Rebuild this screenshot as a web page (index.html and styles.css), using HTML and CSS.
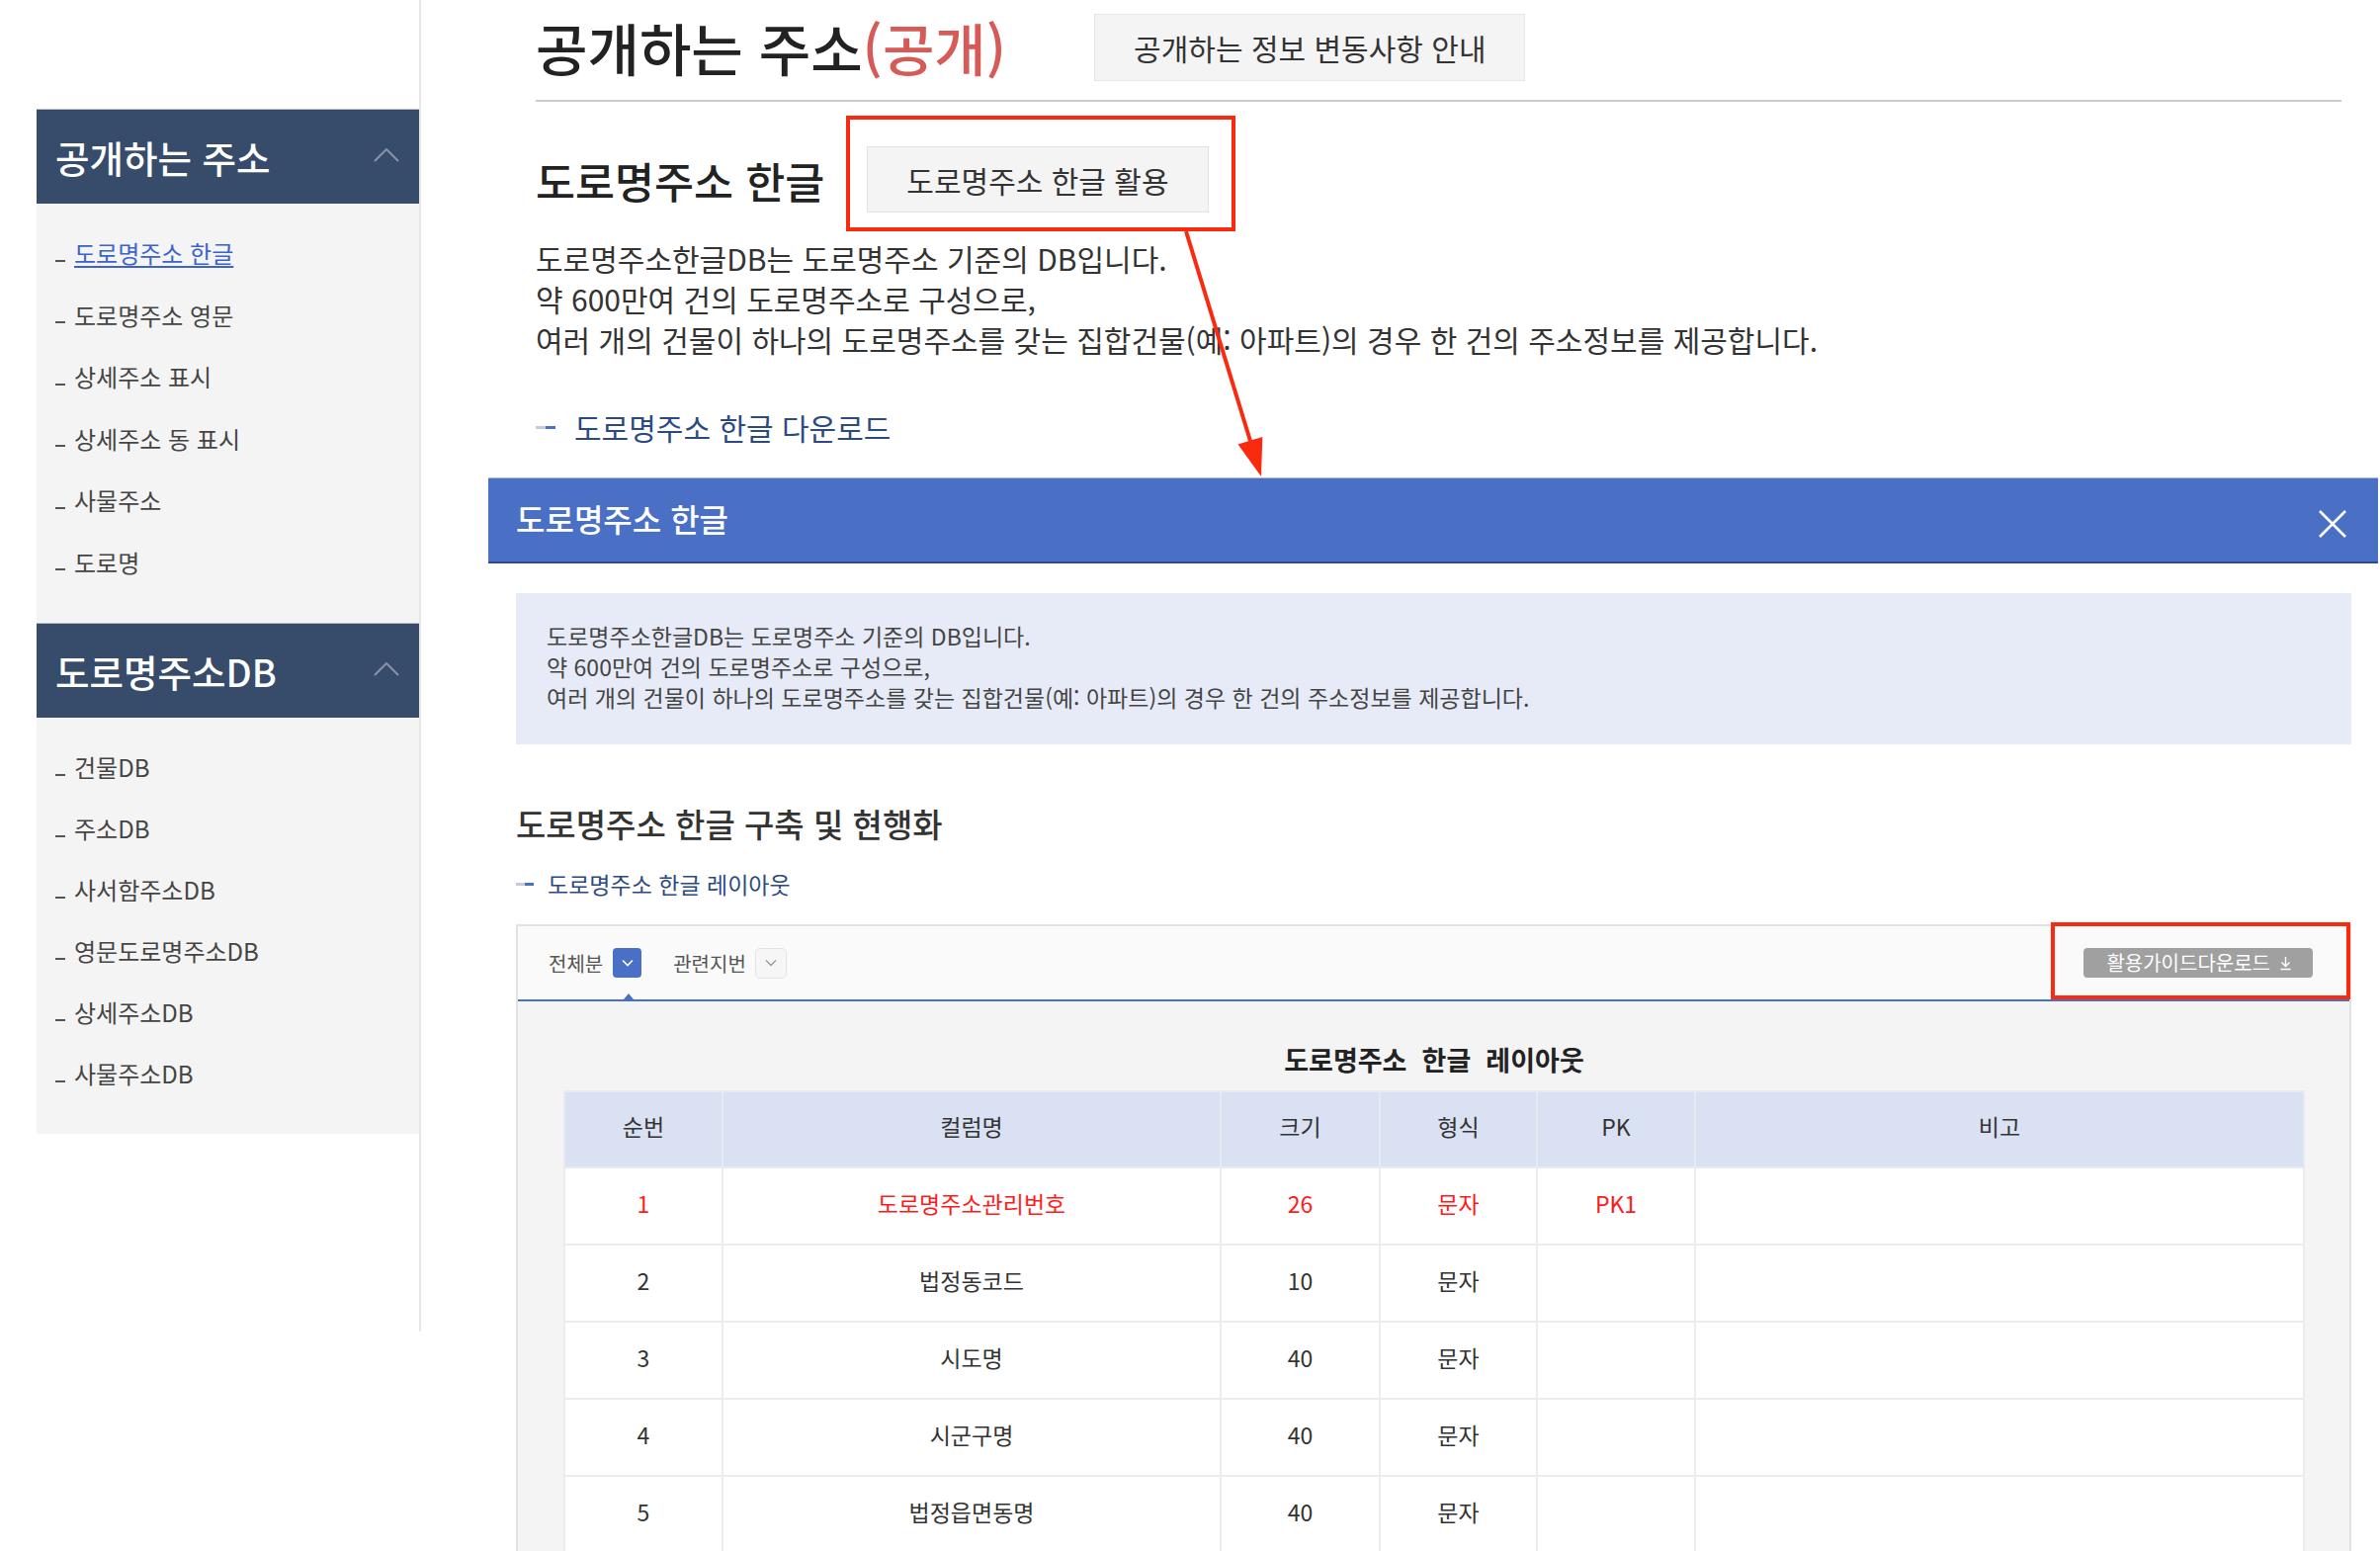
FILE: index.html
```html
<!DOCTYPE html>
<html lang="ko">
<head>
<meta charset="utf-8">
<title>공개하는 주소</title>
<link rel="stylesheet" href="styles.css">
</head>
<body>
<div class="page">
  <aside class="sidebar">
    <div class="nav-head">
      <span>공개하는 주소</span>
      <svg class="chev" width="26" height="14" viewBox="0 0 26 14"><polyline points="1,13 13,1 25,13" fill="none" stroke="#8793a8" stroke-width="2"/></svg>
    </div>
    <ul class="nav-list first">
      <li class="nav-item active"><i class="nav-dash"></i><span>도로명주소 한글</span></li>
      <li class="nav-item"><i class="nav-dash"></i><span>도로명주소 영문</span></li>
      <li class="nav-item"><i class="nav-dash"></i><span>상세주소 표시</span></li>
      <li class="nav-item"><i class="nav-dash"></i><span>상세주소 동 표시</span></li>
      <li class="nav-item"><i class="nav-dash"></i><span>사물주소</span></li>
      <li class="nav-item"><i class="nav-dash"></i><span>도로명</span></li>
    </ul>
    <div class="nav-head">
      <span>도로명주소DB</span>
      <svg class="chev" width="26" height="14" viewBox="0 0 26 14"><polyline points="1,13 13,1 25,13" fill="none" stroke="#8793a8" stroke-width="2"/></svg>
    </div>
    <ul class="nav-list">
      <li class="nav-item"><i class="nav-dash"></i><span>건물DB</span></li>
      <li class="nav-item"><i class="nav-dash"></i><span>주소DB</span></li>
      <li class="nav-item"><i class="nav-dash"></i><span>사서함주소DB</span></li>
      <li class="nav-item"><i class="nav-dash"></i><span>영문도로명주소DB</span></li>
      <li class="nav-item"><i class="nav-dash"></i><span>상세주소DB</span></li>
      <li class="nav-item"><i class="nav-dash"></i><span>사물주소DB</span></li>
    </ul>
  </aside>

  <main class="main">
    <div class="title-row">
      <h1 class="page-title">공개하는 주소<span class="tag">(공개)</span></h1>
      <div class="notice-btn">공개하는 정보 변동사항 안내</div>
    </div>
    <div class="section-row">
      <h2 class="section-title">도로명주소 한글</h2>
      <div class="annot">
        <div class="use-btn">도로명주소 한글 활용</div>
      </div>
    </div>
    <p class="desc">도로명주소한글DB는 도로명주소 기준의 DB입니다.<br>약 600만여 건의 도로명주소로 구성으로,<br>여러 개의 건물이 하나의 도로명주소를 갖는 집합건물(예: 아파트)의 경우 한 건의 주소정보를 제공합니다.</p>
    <div class="dl-link"><span class="link-mark"><i class="g"></i><i class="b"></i></span>도로명주소 한글 다운로드</div>
  </main>
</div>

<section class="modal">
  <div class="modal-head">
    <span class="modal-title">도로명주소 한글</span>
    <svg class="close" width="28" height="28" viewBox="0 0 28 28"><path d="M1 1 L27 27 M27 1 L1 27" stroke="#fff" stroke-width="2.6" fill="none"/></svg>
  </div>
  <div class="modal-body">
    <div class="info">도로명주소한글DB는 도로명주소 기준의 DB입니다.<br>약 600만여 건의 도로명주소로 구성으로,<br>여러 개의 건물이 하나의 도로명주소를 갖는 집합건물(예: 아파트)의 경우 한 건의 주소정보를 제공합니다.</div>
    <h3 class="sub-title">도로명주소 한글 구축 및 현행화</h3>
    <div class="sub-link"><span class="link-mark small"><i class="g"></i><i class="b"></i></span>도로명주소 한글 레이아웃</div>
    <div class="layout-box">
      <div class="tabs">
        <div class="tab">전체분<span class="tab-icon on"><svg width="12" height="8" viewBox="0 0 12 8"><polyline points="1,1.5 6,6.5 11,1.5" fill="none" stroke="#fff" stroke-width="1.6"/></svg></span></div>
        <div class="tab">관련지번<span class="tab-icon off"><svg width="12" height="8" viewBox="0 0 12 8"><polyline points="1,1.5 6,6.5 11,1.5" fill="none" stroke="#9a9a9a" stroke-width="1.4"/></svg></span></div>
        <div class="guide-wrap">
          <div class="guide-btn">활용가이드다운로드<svg class="dl-ico" width="11" height="15" viewBox="0 0 11 15"><path d="M5.5 1 V10 M1.5 6.5 L5.5 10.5 L9.5 6.5 M0.5 13.5 H10.5" fill="none" stroke="#fff" stroke-width="1.4"/></svg></div>
          <span class="annot-frame"></span>
        </div>
      </div>
      <div class="layout-body">
        <div class="layout-title">도로명주소&nbsp; 한글&nbsp; 레이아웃</div>
        <table class="layout-table">
          <colgroup>
            <col class="c1"><col class="c2"><col class="c3"><col class="c4"><col class="c5"><col>
          </colgroup>
          <thead>
            <tr><th>순번</th><th>컬럼명</th><th>크기</th><th>형식</th><th>PK</th><th>비고</th></tr>
          </thead>
          <tbody>
            <tr class="key"><td>1</td><td>도로명주소관리번호</td><td>26</td><td>문자</td><td>PK1</td><td></td></tr>
            <tr><td>2</td><td>법정동코드</td><td>10</td><td>문자</td><td></td><td></td></tr>
            <tr><td>3</td><td>시도명</td><td>40</td><td>문자</td><td></td><td></td></tr>
            <tr><td>4</td><td>시군구명</td><td>40</td><td>문자</td><td></td><td></td></tr>
            <tr><td>5</td><td>법정읍면동명</td><td>40</td><td>문자</td><td></td><td></td></tr>
          </tbody>
        </table>
      </div>
    </div>
  </div>
</section>

<svg class="arrow" width="110" height="265" viewBox="0 0 110 265">
  <line x1="15" y1="9" x2="80" y2="221" stroke="#fa2a0f" stroke-width="4"/>
  <polygon points="92.3,216.9 91,257 67.5,224.5" fill="#fa2a0f"/>
</svg>
</body>
</html>
```

FILE: styles.css
```css
* { box-sizing: border-box; }
html, body { margin: 0; padding: 0; }
body {
  width: 2408px;
  height: 1569px;
  overflow: hidden;
  position: relative;
  background: #fff;
  color: #333;
  font-family: "Noto Sans CJK KR", "Noto Sans", sans-serif;
}

.page { display: flex; align-items: flex-start; }

/* Sidebar */
.sidebar {
  margin-left: 37px;
  width: 389px;
  height: 1347px;
  border-right: 2px solid #e8e8e8;
  padding-top: 110px;
  flex-shrink: 0;
}
.nav-head {
  height: 96px;
  display: flex;
  align-items: center;
  justify-content: space-between;
  padding: 0 20px 0 19px;
  background: #374b6b;
  border-top: 1px solid #b9c0cc;
  color: #fff;
  font-size: 37.5px;
  font-weight: 500;
  line-height: 1;
}
.chev { margin-top: -4px; }
.nav-list {
  list-style: none;
  margin: 0;
  padding: 19px 0 30px;
  background: #f4f4f4;
}
.nav-item {
  height: 62px;
  display: flex;
  align-items: center;
  padding-left: 19px;
  font-size: 24px;
  line-height: 1;
  color: #444;
}
.nav-list.first .nav-item { height: 62.5px; }
.nav-dash {
  width: 10px;
  height: 2px;
  background: #555;
  margin-top: 15px;
  margin-right: 9px;
}
.nav-item.active span { color: #3b63c9; text-decoration: underline; text-underline-offset: 3px; }

/* Main */
.main { flex: 1; padding: 0 39px 0 116px; }
.title-row {
  display: flex;
  align-items: center;
  height: 103px;
  padding-bottom: 6px;
  border-bottom: 2px solid #cbcbcb;
}
.page-title {
  margin: 0;
  font-size: 57px;
  font-weight: 500;
  line-height: 1.2;
  color: #222;
  white-space: nowrap;
}
.page-title .tag { color: #d65a55; }
.notice-btn {
  margin-left: 89px;
  height: 68px;
  padding: 0 39px;
  display: flex;
  align-items: center;
  background: #f4f4f4;
  border: 1px solid #e6e6e6;
  font-size: 30px;
  color: #333;
}
.section-row { display: flex; align-items: center; margin-top: 14px; }
.section-title {
  margin: 0;
  padding-top: 15px;
  font-size: 43.5px;
  font-weight: 500;
  line-height: 1.2;
  color: #222;
}
.annot {
  margin-left: 22px;
  border: 4px solid #fa2a0f;
  padding: 27px 23px 15px 17px;
}
.use-btn {
  height: 67px;
  padding: 0 39px;
  display: flex;
  align-items: center;
  background: #f4f4f4;
  border: 1px solid #e2e2e2;
  font-size: 30px;
  color: #333;
}
.desc {
  margin: 7px 0 0;
  font-size: 30px;
  line-height: 41px;
  color: #333;
}
.dl-link {
  margin-top: 48px;
  display: flex;
  align-items: center;
  font-size: 30px;
  line-height: 40px;
  color: #2c4a80;
}
.link-mark { display: flex; margin-right: 19px; }
.link-mark i { display: block; width: 10px; height: 3px; }
.link-mark .g { background: #c5cbd8; }
.link-mark .b { background: #4a70c6; }
.link-mark.small { margin-right: 14px; }
.link-mark.small i { width: 9px; height: 3px; }

/* Modal */
.modal {
  position: absolute;
  left: 494px;
  top: 483px;
  right: 0;
  bottom: 0;
  background: #fff;
  overflow: hidden;
}
.modal-head {
  height: 87px;
  margin-right: 2px;
  display: flex;
  align-items: center;
  justify-content: space-between;
  padding: 0 32px 0 28px;
  background: #4a70c6;
  border-top: 1px solid #a9b8de;
  border-bottom: 2px solid #2d4d8f;
}
.modal-title { font-size: 32px; font-weight: 500; color: #fff; line-height: 1; margin-top: -5px; }
.close { margin-top: 8px; }
.modal-body { padding: 30px 29px 0 28px; }
.info {
  background: #e6ebf7;
  padding: 28px 31px 32px;
  font-size: 23px;
  line-height: 31px;
  color: #444;
}
.sub-title {
  margin: 58px 0 0;
  font-size: 33px;
  font-weight: 500;
  line-height: 44px;
  color: #333;
}
.sub-link {
  margin-top: 21px;
  display: flex;
  align-items: center;
  font-size: 23px;
  line-height: 36px;
  color: #2c4a80;
}
.layout-box {
  margin-top: 23px;
  border: 2px solid #e2e2e2;
  border-bottom: none;
  background: #f4f4f4;
}
.tabs {
  height: 76px;
  display: flex;
  align-items: center;
  padding: 0 37px 0 31px;
  background: #fafafa;
  border-bottom: 2px solid #4a70c6;
}
.tab {
  display: flex;
  align-items: center;
  font-size: 20px;
  color: #555;
}
.tab + .tab { margin-left: 32px; }
.tab-icon {
  margin-left: 10px;
  width: 29px;
  height: 30px;
  border-radius: 4px;
  display: flex;
  align-items: center;
  justify-content: center;
  position: relative;
}
.tab-icon.on { background: #4a6fc7; }
.tab-icon.on::after {
  content: "";
  position: absolute;
  left: 50%;
  top: 46px;
  margin-left: -4px;
  border-left: 5px solid transparent;
  border-right: 5px solid transparent;
  border-bottom: 6px solid #4a70c6;
}
.tab-icon.off {
  margin-left: 9px;
  width: 32px;
  height: 31px;
  border-radius: 5px;
  background: #f6f6f6;
  border: 1px solid #e3e3e3;
}
.guide-wrap { margin-left: auto; position: relative; }
.guide-btn {
  height: 30px;
  display: flex;
  align-items: center;
  padding: 0 22px 0 23px;
  background: #a0a0a0;
  border-radius: 4px;
  color: #fff;
  font-size: 20px;
  line-height: 1;
}
.dl-ico { margin-left: 10px; }
.annot-frame {
  position: absolute;
  top: -26px;
  left: -33px;
  right: -38px;
  bottom: -22px;
  border: 4px solid #fa2a0f;
}
.layout-body { padding: 41px 45px 0 46px; }
.layout-title {
  text-align: center;
  font-size: 27px;
  font-weight: 700;
  line-height: 36px;
  color: #222;
  margin-bottom: 13px;
}
.layout-table {
  width: 100%;
  border-collapse: collapse;
  table-layout: fixed;
  font-size: 23px;
}
.layout-table .c1 { width: 160px; }
.layout-table .c2 { width: 504px; }
.layout-table .c3 { width: 161px; }
.layout-table .c4 { width: 159px; }
.layout-table .c5 { width: 160px; }
.layout-table th,
.layout-table td {
  height: 78px;
  padding: 0 0 7px;
  text-align: center;
  border: 2px solid #ececec;
  color: #333;
  font-weight: 400;
}
.layout-table th { height: 77px; background: #dae1f2; border-color: #e6eaf4; }
.layout-table td { background: #fff; }
.layout-table tr.key td { color: #ff1a1a; }

/* Annotation arrow */
.arrow {
  position: absolute;
  left: 1185px;
  top: 225px;
}
```
